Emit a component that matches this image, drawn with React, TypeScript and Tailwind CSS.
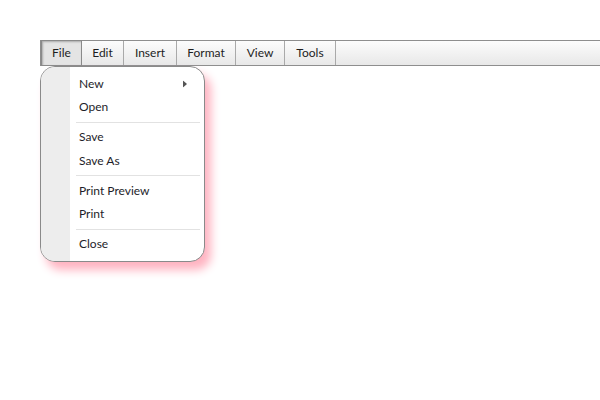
import React from "react";

const items: { label: string; w: number; active?: boolean }[] = [
  { label: "File", w: 41, active: true },
  { label: "Edit", w: 42 },
  { label: "Insert", w: 53 },
  { label: "Format", w: 59 },
  { label: "View", w: 49 },
  { label: "Tools", w: 51 },
];

type Entry = { label?: string; sub?: boolean; sep?: boolean };
const menu: Entry[] = [
  { label: "New", sub: true },
  { label: "Open" },
  { sep: true },
  { label: "Save" },
  { label: "Save As" },
  { sep: true },
  { label: "Print Preview" },
  { label: "Print" },
  { sep: true },
  { label: "Close" },
];

export default function App() {
  return (
    <div
      className="relative w-[600px] h-[400px] bg-white pt-[40px] pl-[40px] overflow-hidden"
      style={{ fontFamily: "Lato, 'Open Sans', sans-serif" }}
    >
      <div className="flex h-[26px] border-y border-l border-[#8e8e8e] bg-gradient-to-b from-[#fcfcfc] to-[#e8e8e8] text-[12px] text-[#1e1e1e]">
        {items.map((it) => (
          <div
            key={it.label}
            style={{ width: it.w }}
            className={
              it.active
                ? "flex items-center justify-center border border-[#8a8a8a] -my-px bg-[#e4e4e4] shadow-[inset_1px_1px_2px_rgba(0,0,0,0.25)]"
                : "flex items-center justify-center border-r border-[#a9a9a9]"
            }
          >
            {it.label}
          </div>
        ))}
      </div>
      <div className="absolute left-[40px] top-[66px] w-[165px] h-[196px] rounded-[15px] border border-[#8a8a8a] bg-white overflow-hidden shadow-[6px_8px_10px_#ffb3c1] flex">
        <div className="w-[29px] bg-[#ededed]" />
        <div className="flex-1 flex flex-col pt-[5px] pr-[4px] text-[12px] text-[#1e1e2a]">
          {menu.map((m, i) =>
            m.sep ? (
              <div key={i} className="h-[6.5px] flex items-center pl-[6px]">
                <div className="h-px w-full bg-[#e2e2e2]" />
              </div>
            ) : (
              <div key={i} className="h-[23.5px] flex items-center pl-[9px] relative">
                <span>{m.label}</span>
                {m.sub && (
                  <svg className="absolute right-[13px] top-1/2 -translate-y-1/2" width="4" height="7" viewBox="0 0 4 7">
                    <path d="M0 0 L4 3.5 L0 7 Z" fill="#555" />
                  </svg>
                )}
              </div>
            )
          )}
        </div>
      </div>
    </div>
  );
}
